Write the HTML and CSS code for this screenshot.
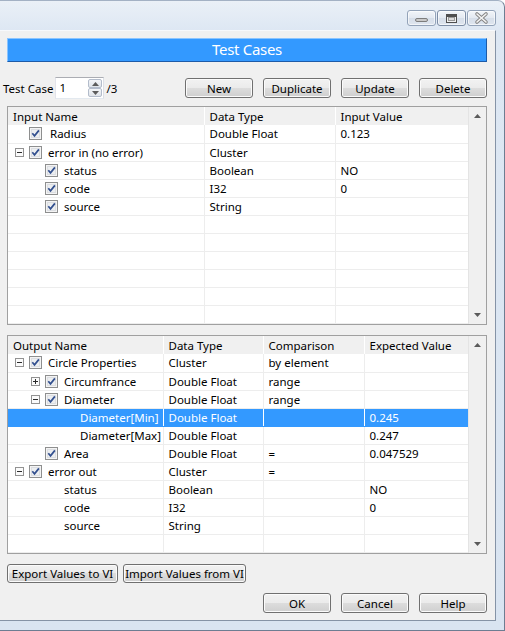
FILE: index.html
```html
<!DOCTYPE html>
<html>
<head>
<meta charset="utf-8">
<link rel="stylesheet" href="styles.css">
</head>
<body>
<svg class="defs" width="0" height="0">
  <defs>
    <symbol id="cbx" viewBox="0 0 13 13">
      <rect x="0.5" y="0.5" width="12" height="12" fill="#f4f4f4" stroke="#8e8f8f"/>
      <rect x="2" y="2" width="9" height="9" fill="#dcdee2"/>
      <rect x="3" y="3" width="7" height="7" fill="#eceef0"/>
      <path d="M3.3 6.3 L5.5 8.9 L9.9 3.4" fill="none" stroke="#33508f" stroke-width="1.7"/>
    </symbol>
    <symbol id="minus" viewBox="0 0 9 9">
      <rect x="0.5" y="0.5" width="8" height="8" fill="#fbfbfb" stroke="#929292"/>
      <path d="M2 4.5 H7" stroke="#2b2b2b" stroke-width="1"/>
    </symbol>
    <symbol id="plus" viewBox="0 0 9 9">
      <rect x="0.5" y="0.5" width="8" height="8" fill="#fbfbfb" stroke="#929292"/>
      <path d="M2 4.5 H7 M4.5 2 V7" stroke="#2b2b2b" stroke-width="1"/>
    </symbol>
    <symbol id="up" viewBox="0 0 7 4">
      <path d="M0 4 L3.5 0 L7 4 Z" fill="#5b5b5b"/>
    </symbol>
    <symbol id="down" viewBox="0 0 7 4">
      <path d="M0 0 L3.5 4 L7 0 Z" fill="#5b5b5b"/>
    </symbol>
  </defs>
</svg>
<div class="window">
  <div class="titlebar">
    <div class="cbtn">
      <svg width="27" height="14" viewBox="0 0 27 14"><rect x="7.5" y="7.5" width="12" height="3" rx="1.5" fill="#c9c9c9" stroke="#7d7d7d"/></svg>
    </div>
    <div class="cbtn active">
      <svg width="27" height="14" viewBox="0 0 27 14"><rect x="8.5" y="3.5" width="10" height="8" fill="#f0f0f0" stroke="#4f4f4f"/><rect x="9" y="4" width="9" height="2" fill="#4f4f4f"/><rect x="10.5" y="6.5" width="6" height="3" fill="#dcdcdc" stroke="#9a9a9a"/></svg>
    </div>
    <div class="cbtn">
      <svg width="27" height="14" viewBox="0 0 27 14"><path d="M9 3 L18 11 M18 3 L9 11" stroke="#868686" stroke-width="3.6" stroke-linecap="round"/><path d="M9 3 L18 11 M18 3 L9 11" stroke="#f4f4f4" stroke-width="1.6" stroke-linecap="round"/></svg>
    </div>
  </div>
  <div class="client">
    <div class="banner">Test Cases</div>

    <div class="toolbar">
      <span class="label">Test Case</span>
      <div class="spin">
        <span class="spin-val">1</span>
        <div class="spin-btns">
          <div class="spin-b"><svg width="7" height="4"><use href="#up" fill="#4d6185"/></svg></div>
          <div class="spin-b"><svg width="7" height="4"><use href="#down"/></svg></div>
        </div>
      </div>
      <span class="of">/3</span>
      <div class="btn-group">
        <button class="btn">New</button>
        <button class="btn">Duplicate</button>
        <button class="btn">Update</button>
        <button class="btn">Delete</button>
      </div>
    </div>

    <div class="gridbox">
      <div class="grid-area">
        <table class="grid input-grid">
          <colgroup><col class="ic1"><col class="ic2"><col class="ic3"></colgroup>
          <thead>
            <tr><th>Input Name</th><th>Data Type</th><th>Input Value</th></tr>
          </thead>
          <tbody>
            <tr><td><div class="nm l0"><span class="exp"></span><span class="cbs"><svg width="13" height="13"><use href="#cbx"/></svg></span><span class="pad1">Radius</span></div></td><td>Double Float</td><td>0.123</td></tr>
            <tr><td><div class="nm l0"><span class="exp"><svg width="9" height="9"><use href="#minus"/></svg></span><span class="cbs"><svg width="13" height="13"><use href="#cbx"/></svg></span><span>error in (no error)</span></div></td><td>Cluster</td><td></td></tr>
            <tr><td><div class="nm l1"><span class="exp"></span><span class="cbs"><svg width="13" height="13"><use href="#cbx"/></svg></span><span>status</span></div></td><td>Boolean</td><td>NO</td></tr>
            <tr><td><div class="nm l1"><span class="exp"></span><span class="cbs"><svg width="13" height="13"><use href="#cbx"/></svg></span><span>code</span></div></td><td>I32</td><td>0</td></tr>
            <tr><td><div class="nm l1"><span class="exp"></span><span class="cbs"><svg width="13" height="13"><use href="#cbx"/></svg></span><span>source</span></div></td><td>String</td><td></td></tr>
            <tr><td></td><td></td><td></td></tr>
            <tr><td></td><td></td><td></td></tr>
            <tr><td></td><td></td><td></td></tr>
            <tr><td></td><td></td><td></td></tr>
            <tr><td></td><td></td><td></td></tr>
            <tr><td></td><td></td><td></td></tr>
          </tbody>
        </table>
      </div>
      <div class="scrollbar">
        <div class="arrow"><svg width="7" height="4"><use href="#up"/></svg></div>
        <div class="arrow"><svg width="7" height="4"><use href="#down"/></svg></div>
      </div>
    </div>

    <div class="gridbox out">
      <div class="grid-area">
        <table class="grid output-grid">
          <colgroup><col class="oc1"><col class="oc2"><col class="oc3"><col class="oc4"></colgroup>
          <thead>
            <tr><th>Output Name</th><th>Data Type</th><th>Comparison</th><th>Expected Value</th></tr>
          </thead>
          <tbody>
            <tr><td><div class="nm l0"><span class="exp"><svg width="9" height="9"><use href="#minus"/></svg></span><span class="cbs"><svg width="13" height="13"><use href="#cbx"/></svg></span><span>Circle Properties</span></div></td><td>Cluster</td><td>by element</td><td></td></tr>
            <tr><td><div class="nm l1"><span class="exp"><svg width="9" height="9"><use href="#plus"/></svg></span><span class="cbs"><svg width="13" height="13"><use href="#cbx"/></svg></span><span>Circumfrance</span></div></td><td>Double Float</td><td>range</td><td></td></tr>
            <tr><td><div class="nm l1"><span class="exp"><svg width="9" height="9"><use href="#minus"/></svg></span><span class="cbs"><svg width="13" height="13"><use href="#cbx"/></svg></span><span>Diameter</span></div></td><td>Double Float</td><td>range</td><td></td></tr>
            <tr class="sel"><td><div class="nm l2"><span class="exp"></span><span class="cbs"></span><span>Diameter[Min]</span></div></td><td>Double Float</td><td></td><td>0.245</td></tr>
            <tr><td><div class="nm l2"><span class="exp"></span><span class="cbs"></span><span>Diameter[Max]</span></div></td><td>Double Float</td><td></td><td>0.247</td></tr>
            <tr><td><div class="nm l1"><span class="exp"></span><span class="cbs"><svg width="13" height="13"><use href="#cbx"/></svg></span><span>Area</span></div></td><td>Double Float</td><td>=</td><td>0.047529</td></tr>
            <tr><td><div class="nm l0"><span class="exp"><svg width="9" height="9"><use href="#minus"/></svg></span><span class="cbs"><svg width="13" height="13"><use href="#cbx"/></svg></span><span>error out</span></div></td><td>Cluster</td><td>=</td><td></td></tr>
            <tr><td><div class="nm l1"><span class="exp"></span><span class="cbs"></span><span>status</span></div></td><td>Boolean</td><td></td><td>NO</td></tr>
            <tr><td><div class="nm l1"><span class="exp"></span><span class="cbs"></span><span>code</span></div></td><td>I32</td><td></td><td>0</td></tr>
            <tr><td><div class="nm l1"><span class="exp"></span><span class="cbs"></span><span>source</span></div></td><td>String</td><td></td><td></td></tr>
            <tr><td></td><td></td><td></td><td></td></tr>
          </tbody>
        </table>
      </div>
      <div class="scrollbar">
        <div class="arrow"><svg width="7" height="4"><use href="#up"/></svg></div>
        <div class="arrow"><svg width="7" height="4"><use href="#down"/></svg></div>
      </div>
    </div>

    <div class="io-row">
      <button class="btn io export">Export Values to VI</button>
      <button class="btn io import">Import Values from VI</button>
    </div>

    <div class="dialog-row">
      <button class="btn">OK</button>
      <button class="btn">Cancel</button>
      <button class="btn">Help</button>
    </div>
  </div>
</div>
</body>
</html>
```

FILE: styles.css
```css
* { box-sizing: border-box; }
html, body { margin: 0; padding: 0; background: #ffffff; }
body {
  font-family: "Noto Sans", "Open Sans", sans-serif;
  font-size: 11.5px;
  color: #000;
}
.defs { display: block; width: 0; height: 0; overflow: hidden; }

.window {
  width: 505px;
  height: 631px;
  display: flex;
  flex-direction: column;
  background: linear-gradient(#eaf0f7 0px, #dde7f3 30px, #d9e4f1 100%);
  border-top: 1px solid #a3b1c4;
  border-right: 1px solid #6d7d92;
  border-bottom: 1px solid #6d7d92;
  border-top-right-radius: 7px;
  overflow: hidden;
}

.titlebar {
  height: 29px;
  flex: none;
  display: flex;
  justify-content: flex-end;
  align-items: flex-start;
  gap: 1px;
  padding: 9px 8px 0 0;
}
.cbtn {
  width: 29px;
  height: 16px;
  border: 1px solid #93a3b9;
  border-radius: 3px;
  background: linear-gradient(#f2f5f9, #e3e9f1 50%, #d6dee9 51%, #dfe6ef);
  box-shadow: inset 0 0 0 1px rgba(255,255,255,0.6);
  display: flex;
  align-items: center;
  justify-content: center;
}
.cbtn.active { border-color: #7e8ea6; }
.cbtn svg { display: block; }

.client {
  flex: 1;
  margin: 0 8px 9px 0;
  background: #f0f0f0;
  border-top: 1px solid #f7f9fc;
  border-right: 1px solid #8593a6;
  border-bottom: 1px solid #8593a6;
  display: flex;
  flex-direction: column;
}

.banner {
  margin: 7px 0 0 7px;
  width: 480px;
  height: 24px;
  background: #3399ff;
  border: 1px solid;
  border-color: #8ac4ff #1d5ba8 #1d5ba8 #8ac4ff;
  color: #fff;
  font-size: 15px;
  letter-spacing: -0.3px;
  line-height: 21px;
  text-align: center;
}

.toolbar {
  margin-top: 15px;
  height: 22px;
  display: flex;
  align-items: center;
  padding-left: 3px;
}
.label { margin-right: 2px; }
.spin {
  width: 49px;
  height: 22px;
  background: #fff;
  border: 1px solid;
  border-color: #abadb3 #dbdfe6 #e3e9ef #e2e3ea;
  display: flex;
  align-items: stretch;
}
.spin-val { flex: 1; padding-left: 3px; line-height: 19px; }
.spin-btns {
  width: 15px;
  display: flex;
  flex-direction: column;
  padding: 1px 1px 1px 0;
}
.spin-b {
  flex: 1;
  border: 1px solid #b3bccb;
  border-radius: 2px;
  background: linear-gradient(#f3f5f8, #dfe4ea);
  display: flex;
  align-items: center;
  justify-content: center;
}
.spin-b svg { display: block; }
.spin-b use { fill: #4d6185; }
.of { margin-left: 2px; }

.btn-group {
  margin-left: auto;
  margin-right: 8px;
  display: flex;
  gap: 10px;
}
.btn {
  font-family: inherit;
  font-size: 11.5px;
  color: #000;
  width: 68px;
  height: 20px;
  padding: 0;
  border: 1px solid #707070;
  border-radius: 3px;
  background: linear-gradient(#f2f2f2 0%, #ebebeb 49%, #dddddd 50%, #cfcfcf 100%);
  box-shadow: inset 0 0 0 1px #fbfbfb;
  line-height: 17px;
}

.gridbox {
  margin: 7px 0 0 7px;
  width: 480px;
  height: 219px;
  border: 1px solid #a0a0a0;
  background: #fff;
  display: flex;
  overflow: hidden;
}
.gridbox.out { margin-top: 10px; }
.grid-area { width: 460px; overflow: hidden; }
.scrollbar {
  width: 18px;
  background: #f0f0f0;
  border-left: 1px solid #e4e4e4;
  display: flex;
  flex-direction: column;
  justify-content: space-between;
}
.arrow {
  height: 18px;
  display: flex;
  align-items: center;
  justify-content: center;
}
.arrow svg { display: block; }

.grid {
  width: 460px;
  table-layout: fixed;
  border-collapse: collapse;
}
.ic1 { width: 196px; }
.ic2 { width: 131px; }
.ic3 { width: 133px; }
.oc1 { width: 155px; }
.oc2 { width: 100px; }
.oc3 { width: 101px; }
.oc4 { width: 104px; }

.grid th, .grid td {
  height: 18px;
  padding: 0 0 0 5px;
  text-align: left;
  font-weight: normal;
  white-space: nowrap;
  overflow: hidden;
  line-height: 17px;
}
.grid th {
  background: #f0f0f0;
  border-right: 1px solid #ffffff;
}
.grid td {
  border-right: 1px solid #ededed;
  border-bottom: 1px solid #ededed;
}
.grid tr > :last-child { border-right: none; }
.grid td:first-child { padding-left: 0; }

.grid tr.sel td {
  background: #3399ff;
  color: #fff;
  border-right-color: #ffffff;
  border-bottom-color: #3399ff;
}

.nm { display: flex; align-items: center; height: 17px; }
.nm.l0 { padding-left: 7px; }
.nm.l1 { padding-left: 23px; }
.nm.l2 { padding-left: 39px; }
.exp { width: 9px; height: 9px; margin-right: 5px; flex: none; }
.cbs { width: 13px; height: 13px; margin-right: 6px; flex: none; }
.exp svg, .cbs svg { display: block; }
.pad1 { padding-left: 2px; }

.io-row {
  margin: 10px 0 0 7px;
  display: flex;
  gap: 5px;
}
.btn.io { height: 19px; line-height: 16px; }
.btn.export { width: 111px; }
.btn.import { width: 123px; }

.dialog-row {
  margin: 10px 8px 0 0;
  display: flex;
  justify-content: flex-end;
  gap: 10px;
}
```
